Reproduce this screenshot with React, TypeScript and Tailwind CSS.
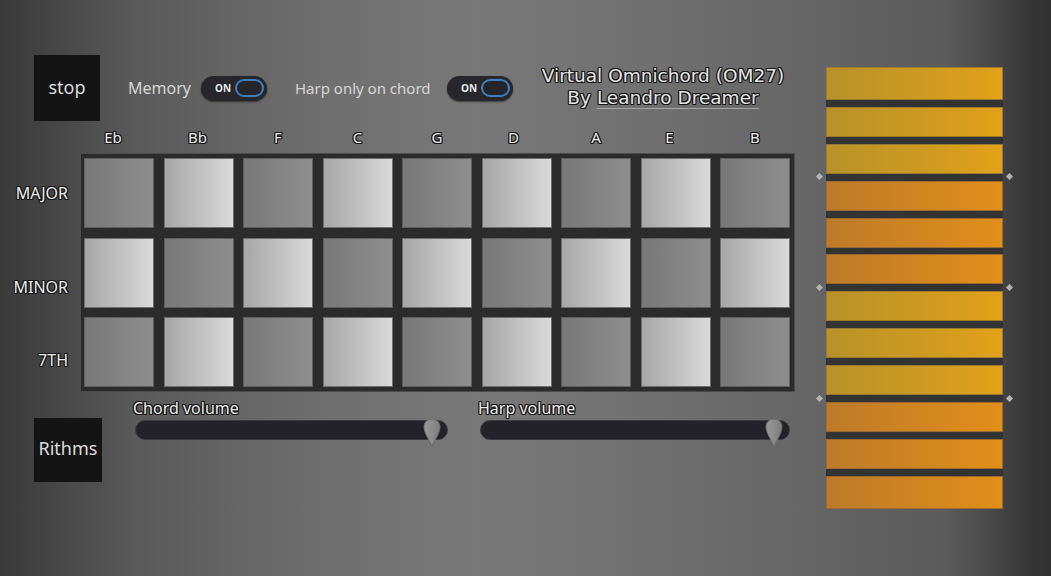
import React from 'react';

const FONT = "font-['Noto_Sans','DejaVu_Sans',sans-serif]";
// dark outline round the light label text
const OUTLINE =
  '[text-shadow:-1px_-1px_0_#161616,1px_-1px_0_#161616,-1px_1px_0_#161616,1px_1px_0_#161616,0_1px_0_#161616,0_-1px_0_#161616,1px_0_0_#161616,-1px_0_0_#161616]';

const CHORDS = [
  { name: 'Eb', cls: 'pr-[12px]' },
  { name: 'Bb', cls: 'pr-[2px]' },
  { name: 'F', cls: '' },
  { name: 'C', cls: '' },
  { name: 'G', cls: '' },
  { name: 'D', cls: 'pr-[6px]' },
  { name: 'A', cls: '' },
  { name: 'E', cls: 'pr-[12px]' },
  { name: 'B', cls: '' },
];

// bar colour pattern: y = yellow, o = orange
const BARS = ['y', 'y', 'y', 'o', 'o', 'o', 'y', 'y', 'y', 'o', 'o', 'o'];

const Toggle: React.FC = () => (
  <div className="w-[66px] h-[25px] rounded-full bg-[#26262b] shadow-[0_1px_2px_rgba(0,0,0,0.5)] flex items-center pl-[14px] pr-[3px] justify-between">
    <span className="text-[10px] font-bold text-[#e8e8e8] leading-none">ON</span>
    <span className="w-[29px] h-[18px] rounded-full border-2 border-[#3f7fb9] bg-[#24252b]" />
  </div>
);

const Thumb: React.FC = () => (
  <svg width="18" height="30" viewBox="0 0 18 30" className="absolute top-[-3px]">
    <defs>
      <linearGradient id="tg" x1="0" y1="0" x2="1" y2="0">
        <stop offset="0" stopColor="#9a9a9a" />
        <stop offset="1" stopColor="#7c7c7c" />
      </linearGradient>
    </defs>
    <path
      d="M9 1 C13.5 1 17 4 17 9 C17 15 12 21 9 29 C6 21 1 15 1 9 C1 4 4.5 1 9 1 Z"
      fill="url(#tg)"
      stroke="#6a6a6a"
      strokeWidth="1"
    />
  </svg>
);

const Slider: React.FC<{ label: string; width: number; thumbLeft: number }> = ({ label, width, thumbLeft }) => (
  <div className="flex flex-col">
    <span className={`h-[18px] leading-[18px] text-[16px] text-[#ececec] ${OUTLINE}`}>{label}</span>
    <div className="relative ml-[2px] mt-[3px] h-[20px] rounded-full bg-[#232228] border border-[#3a3a40]" style={{ width }}>
      <div className="absolute" style={{ left: thumbLeft }}>
        <Thumb />
      </div>
    </div>
  </div>
);

export default function App() {
  return (
    <div
      className={`w-[1051px] h-[576px] overflow-hidden flex ${FONT} bg-[linear-gradient(90deg,#393939_0%,#5a5a5a_13%,#6e6e6e_30%,#787878_45%,#717171_60%,#666666_76%,#5b5b5b_90%,#4a4a4a_94%,#353535_98%,#323232_100%)]`}
    >
      {/* left: controls + chord grid */}
      <div className="w-[826px] flex flex-col">
        {/* top row */}
        <div className="flex items-center pl-[34px] pt-[55px]">
          <button className="w-[66px] h-[66px] bg-[#141414] text-[#dcdcdc] text-[18px] flex items-center justify-center pb-[2px]">
            stop
          </button>
          <span className="ml-[28px] w-[63px] text-[16px] text-[#d6d6d6] whitespace-nowrap">Memory</span>
          <div className="ml-[10px]">
            <Toggle />
          </div>
          <span className="ml-[28px] w-[143px] text-[15px] text-[#d6d6d6] whitespace-nowrap">Harp only on chord</span>
          <div className="ml-[9px]">
            <Toggle />
          </div>
          <div
            className={`ml-[20px] w-[260px] flex flex-col items-center font-['DejaVu_Sans',sans-serif] text-[18.5px] text-[#e6e6e6] ${OUTLINE} -mt-[2px]`}
          >
            <div className="h-[22px] leading-[22px] whitespace-nowrap">Virtual Omnichord (OM27)</div>
            <div className="h-[22px] leading-[22px] whitespace-nowrap">
              By <span className="border-b border-[#bdbdbd]/70">Leandro Dreamer</span>
            </div>
          </div>
        </div>

        {/* chord names */}
        <div className="h-[32px] pl-[84px] grid grid-cols-[repeat(9,70px)] gap-x-[9.5px] items-center">
          {CHORDS.map((c) => (
            <span key={c.name} className={`text-center text-[15px] text-[#ececec] ${OUTLINE} ${c.cls}`}>
              {c.name}
            </span>
          ))}
        </div>

        {/* grid with row labels */}
        <div className="flex">
          <div className={`w-[80px] pr-[12px] flex flex-col items-end text-[16px] text-[#ececec] ${OUTLINE}`}>
            <span className="mt-[30px] h-[20px] leading-[20px]">MAJOR</span>
            <span className="mt-[74px] h-[20px] leading-[20px]">MINOR</span>
            <span className="mt-[53px] h-[20px] leading-[20px]">7TH</span>
          </div>
          <div className="w-[715px] h-[239px] bg-[#2b2b2b] border border-[#4c4c4c] pl-[3px] pt-[4px] grid grid-cols-[repeat(9,70px)] grid-rows-[repeat(3,70px)] gap-[9.5px]">
            {[0, 1, 2].map((row) =>
              CHORDS.map((c, col) => {
                const light = (row + col) % 2 === 1;
                return (
                  <div
                    key={`${row}-${c.name}`}
                    className={
                      light
                        ? 'border border-[#6e6e6e] bg-[linear-gradient(90deg,#a6a6a6,#dadada)]'
                        : 'border border-[#5e5e5e] bg-[linear-gradient(90deg,#787878,#8e8e8e)]'
                    }
                  />
                );
              })
            )}
          </div>
        </div>

        {/* bottom row */}
        <div className="flex items-start pl-[34px] pt-[7px]">
          <button className="mt-[19px] w-[68px] h-[64px] bg-[#141414] text-[#dcdcdc] text-[18px] flex items-center justify-center pb-[3px]">
            Rithms
          </button>
          <div className="ml-[31px]">
            <Slider label="Chord volume" width={313} thumbLeft={287} />
          </div>
          <div className="ml-[30px]">
            <Slider label="Harp volume" width={310} thumbLeft={284} />
          </div>
        </div>
      </div>

      {/* right: harp strings */}
      <div className="mt-[67px] w-[177px] h-[442px] flex flex-col">
        {BARS.map((b, i) => {
          const first = i === 0;
          const last = i === BARS.length - 1;
          const h = first || last ? 'h-[33px]' : 'h-[30px]';
          const color =
            b === 'y'
              ? 'bg-[linear-gradient(90deg,#b6922a,#e2a119)] border-[#9a7a2c]'
              : 'bg-[linear-gradient(90deg,#bd7a2b,#e18f18)] border-[#9c6a2c]';
          const marker = i === 2 || i === 5 || i === 8;
          return (
            <React.Fragment key={i}>
              <div className={`${h} shrink-0 border ${color}`} />
              {!last && (
                <div className="relative h-[6.9px] shrink-0 bg-[#323434]">
                  {marker && (
                    <>
                      <span className="absolute left-[-9px] top-[0.5px] w-[5px] h-[5px] rotate-45 bg-[#b4b4b4]" />
                      <span className="absolute right-[-9px] top-[0.5px] w-[5px] h-[5px] rotate-45 bg-[#b4b4b4]" />
                    </>
                  )}
                </div>
              )}
            </React.Fragment>
          );
        })}
      </div>
    </div>
  );
}
